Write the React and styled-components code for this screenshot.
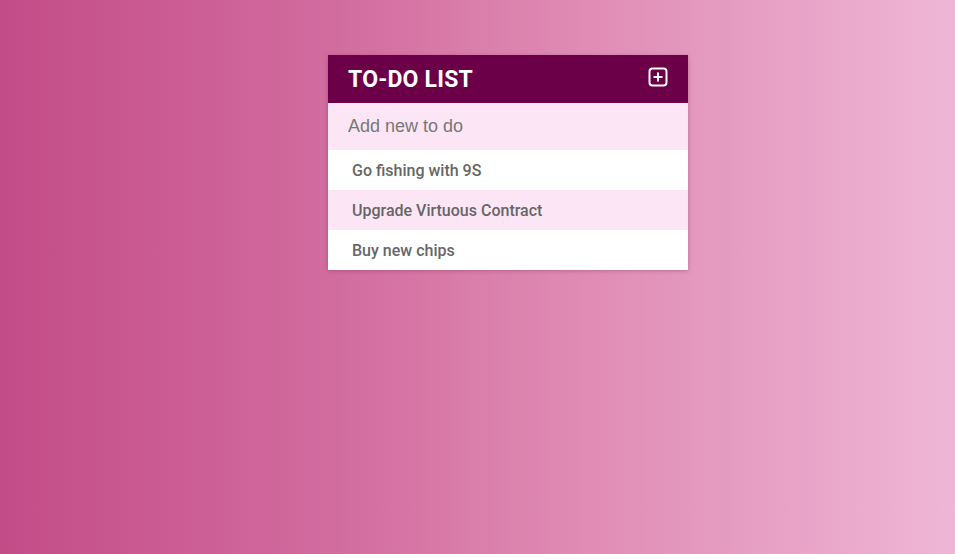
import React, { useState } from "react";
import styled, { createGlobalStyle } from "styled-components";

const GlobalStyle = createGlobalStyle`
  * {
    box-sizing: border-box;
  }
  html, body {
    margin: 0;
    padding: 0;
    height: 100%;
  }
  body {
    font-family: Roboto, "Liberation Sans", sans-serif;
  }
  #root {
    min-height: 100vh;
  }
`;

const Page = styled.div`
  min-height: 100vh;
  background: linear-gradient(to right, #c34c87 0%, #d26c9f 35%, #df8ab3 60%, #efb6d6 100%);
  display: flex;
  justify-content: center;
  align-items: flex-start;
  padding-top: 55px;
`;

const Card = styled.div`
  width: 360px;
  background: #fff;
  box-shadow: 0 1px 4px rgba(80, 0, 40, 0.25);
  margin-left: 61px;
`;

const Header = styled.div`
  height: 48px;
  background: #6b0049;
  display: flex;
  align-items: center;
  justify-content: space-between;
  padding: 0 20px 0 20px;
`;

const Title = styled.h1`
  margin: 0;
  color: #fff;
  font-family: Roboto, sans-serif;
  font-weight: 700;
  font-size: 23px;
  letter-spacing: 0.2px;
`;

const AddButton = styled.button`
  background: none;
  border: none;
  padding: 0;
  margin-top: -4px;
  margin-right: -1px;
  width: 21px;
  height: 21px;
  display: flex;
  color: #fff;
  cursor: pointer;
`;

const NewInput = styled.input`
  display: block;
  width: 100%;
  height: 47px;
  border: none;
  outline: none;
  background: #fce6f6;
  padding: 0 20px;
  font-family: "Liberation Sans", Arial, sans-serif;
  font-size: 18px;
  color: #555;
  &::placeholder {
    color: #777;
  }
`;

const List = styled.ul`
  list-style: none;
  margin: 0;
  padding: 0;
`;

const Item = styled.li`
  height: 40px;
  display: flex;
  align-items: center;
  padding: 0 24px;
  background: ${(p) => (p.$alt ? "#fce6f6" : "#fff")};
  color: #666;
  font-family: Roboto, sans-serif;
  font-weight: 500;
  font-size: 16px;
`;

const PlusSquare = () => (
  <svg width="21" height="21" viewBox="0 0 21 21" fill="none" stroke="currentColor" strokeWidth="2">
    <rect x="1.5" y="1.5" width="17" height="17" rx="3" />
    <line x1="10" y1="5.5" x2="10" y2="14.5" />
    <line x1="5.5" y1="10" x2="14.5" y2="10" />
  </svg>
);

export default function App() {
  const [todos] = useState([
    "Go fishing with 9S",
    "Upgrade Virtuous Contract",
    "Buy new chips",
  ]);

  return (
    <>
      <GlobalStyle />
      <Page>
        <Card>
          <Header>
            <Title>TO-DO LIST</Title>
            <AddButton aria-label="add">
              <PlusSquare />
            </AddButton>
          </Header>
          <NewInput placeholder="Add new to do" />
          <List>
            {todos.map((t, i) => (
              <Item key={t} $alt={i % 2 === 1}>
                {t}
              </Item>
            ))}
          </List>
        </Card>
      </Page>
    </>
  );
}
